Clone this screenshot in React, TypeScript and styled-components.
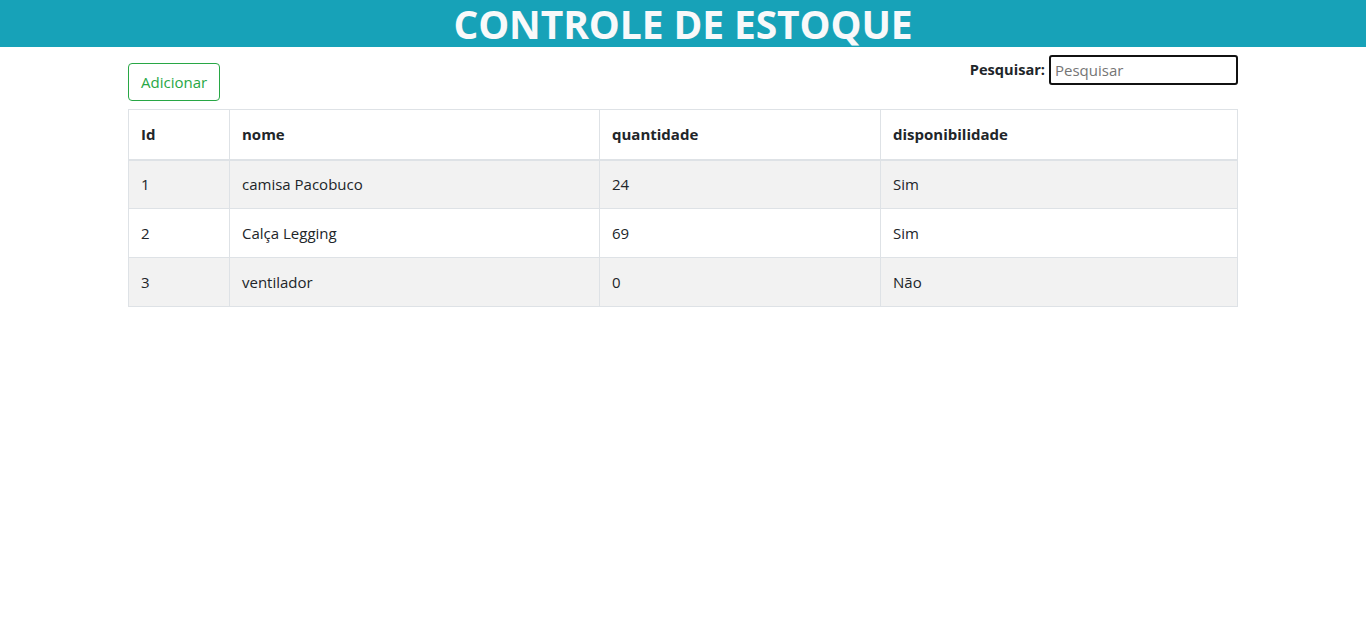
import React, { useState } from 'react';
import styled, { createGlobalStyle } from 'styled-components';

interface Produto {
  id: number;
  nome: string;
  quantidade: number;
  disponibilidade: string;
}

const produtos: Produto[] = [
  { id: 1, nome: 'camisa Pacobuco', quantidade: 24, disponibilidade: 'Sim' },
  { id: 2, nome: 'Calça Legging', quantidade: 69, disponibilidade: 'Sim' },
  { id: 3, nome: 'ventilador', quantidade: 0, disponibilidade: 'Não' },
];

const GlobalStyle = createGlobalStyle`
  body {
    margin: 0;
    background: #fff;
    color: #212529;
    font-family: "Open Sans", "Noto Sans", sans-serif;
    font-size: 15px;
    line-height: 1.5;
  }
  * {
    box-sizing: border-box;
  }
`;

const Header = styled.header`
  background-color: #17a2b8;
  height: 47px;
  display: flex;
  align-items: center;
  justify-content: center;
`;

const Title = styled.h1`
  margin: 0;
  color: #f8f9fa;
  font-size: 39px;
  font-weight: 700;
  line-height: 47px;
  letter-spacing: -0.1px;
`;

const Container = styled.div`
  width: 1110px;
  margin: 0 auto;
`;

const Toolbar = styled.div`
  display: flex;
  justify-content: space-between;
  align-items: flex-start;
  padding-top: 8px;
`;

const AddButton = styled.button`
  margin-top: 8px;
  height: 38px;
  padding: 0 12px;
  font-family: inherit;
  font-size: 15px;
  color: #28a745;
  background: #fff;
  border: 1px solid #28a745;
  border-radius: 4px;
  cursor: pointer;

  &:hover {
    background: #28a745;
    color: #fff;
  }
`;

const SearchLabel = styled.label`
  display: flex;
  align-items: center;
  gap: 4px;
  font-weight: 700;
  font-size: 14.6px;
`;

const SearchInput = styled.input`
  width: 189px;
  height: 30px;
  padding: 0 4px;
  font-family: inherit;
  font-size: 15px;
  color: #212529;
  border: 2px solid #111;
  border-radius: 3px;
  outline: none;

  &::placeholder {
    color: #757575;
  }
`;

const Table = styled.table`
  width: 1109px;
  margin-top: 8px;
  border-collapse: collapse;
  table-layout: fixed;
`;

const Th = styled.th<{ $width: number }>`
  width: ${(p) => p.$width}px;
  text-align: left;
  padding: 12px;
  height: 50px;
  font-weight: 700;
  border: 1px solid #dee2e6;
  border-bottom: 2px solid #dee2e6;
`;

const Row = styled.tr<{ $striped: boolean }>`
  background-color: ${(p) => (p.$striped ? '#f2f2f2' : '#fff')};
`;

const Td = styled.td`
  padding: 12px;
  height: 49px;
  border: 1px solid #dee2e6;
`;

const App: React.FC = () => {
  const [busca, setBusca] = useState('');

  const filtrados = produtos.filter((p) =>
    p.nome.toLowerCase().includes(busca.toLowerCase())
  );

  return (
    <>
      <GlobalStyle />
      <Header>
        <Title>CONTROLE DE ESTOQUE</Title>
      </Header>
      <Container>
        <Toolbar>
          <AddButton>Adicionar</AddButton>
          <SearchLabel>
            Pesquisar:
            <SearchInput
              placeholder="Pesquisar"
              value={busca}
              onChange={(e) => setBusca(e.target.value)}
            />
          </SearchLabel>
        </Toolbar>

        <Table>
          <thead>
            <tr>
              <Th $width={101}>Id</Th>
              <Th $width={370}>nome</Th>
              <Th $width={281}>quantidade</Th>
              <Th $width={357}>disponibilidade</Th>
            </tr>
          </thead>
          <tbody>
            {filtrados.map((p, i) => (
              <Row key={p.id} $striped={i % 2 === 0}>
                <Td>{p.id}</Td>
                <Td>{p.nome}</Td>
                <Td>{p.quantidade}</Td>
                <Td>{p.disponibilidade}</Td>
              </Row>
            ))}
          </tbody>
        </Table>
      </Container>
    </>
  );
};

export default App;
